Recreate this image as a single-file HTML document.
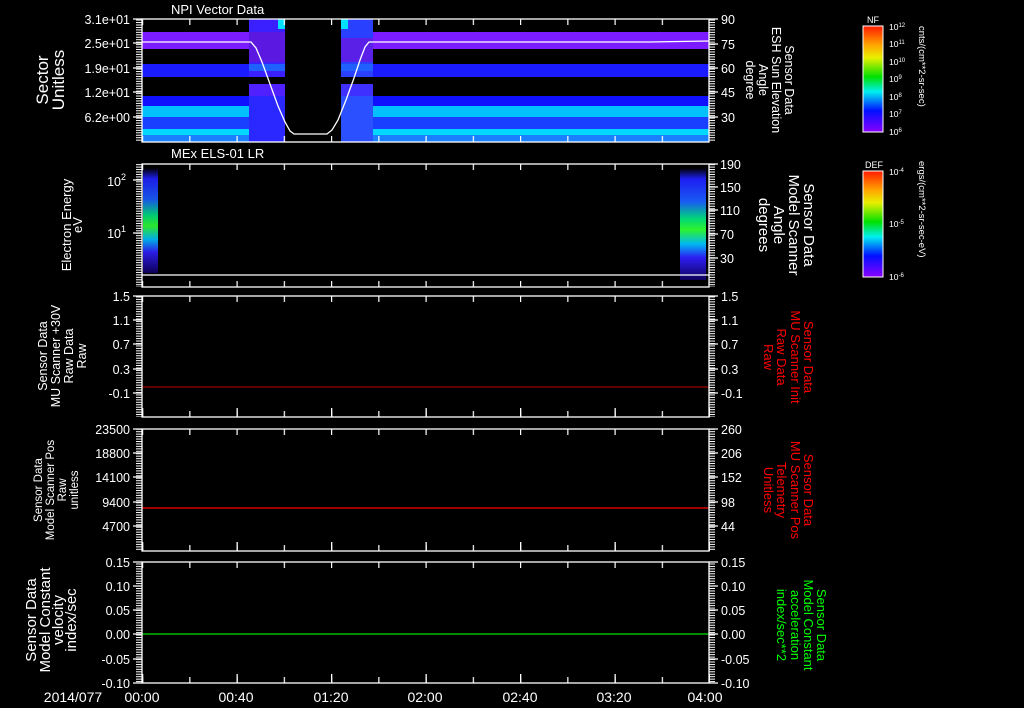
<!DOCTYPE html>
<html><head><meta charset="utf-8"><style>
html,body{margin:0;padding:0;background:#000;}
svg{display:block;font-family:"Liberation Sans",sans-serif;}
</style></head><body>
<svg width="1024" height="708" viewBox="0 0 1024 708" xmlns="http://www.w3.org/2000/svg">
<defs>
<pattern id="ml" width="8" height="2.45" patternUnits="userSpaceOnUse"><rect x="0" y="0" width="8" height="1" fill="#fff"/></pattern>
<pattern id="vt" width="47.25" height="10" patternUnits="userSpaceOnUse" x="142"><rect x="0" y="0" width="1.2" height="10" fill="#fff"/></pattern>
<pattern id="vt2" width="94.5" height="14" patternUnits="userSpaceOnUse" x="142"><rect x="0" y="0" width="1.3" height="14" fill="#fff"/></pattern>
<linearGradient id="cb" x1="0" y1="0" x2="0" y2="1">
<stop offset="0" stop-color="#ff1a00"/><stop offset="0.18" stop-color="#ffa500"/><stop offset="0.3" stop-color="#e8f000"/><stop offset="0.48" stop-color="#00e000"/><stop offset="0.62" stop-color="#00f0f0"/><stop offset="0.8" stop-color="#0010ff"/><stop offset="1" stop-color="#8a00ff"/>
</linearGradient>
<linearGradient id="els" x1="0" y1="0" x2="0" y2="1">
<stop offset="0" stop-color="#000"/><stop offset="0.1" stop-color="#2020ff"/><stop offset="0.3" stop-color="#1a60ff"/><stop offset="0.45" stop-color="#00e080"/><stop offset="0.55" stop-color="#30ff30"/><stop offset="0.68" stop-color="#00c0ff"/><stop offset="0.8" stop-color="#3020ff"/><stop offset="1" stop-color="#100060"/>
</linearGradient>
</defs>
<rect width="1024" height="708" fill="#000"/>

<g>
<rect x="142" y="32" width="107" height="17" fill="#7a1cff"/>
<rect x="142" y="64" width="107" height="13" fill="#1a1cff"/>
<rect x="142" y="96" width="107" height="10" fill="#1010ff"/>
<rect x="142" y="106" width="107" height="11" fill="#00c0ff"/>
<rect x="142" y="117" width="107" height="12" fill="#1a40ff"/>
<rect x="142" y="129" width="107" height="6" fill="#00d8ff"/>
<rect x="142" y="135" width="107" height="7" fill="#1a80ff"/>
<rect x="373" y="32" width="336" height="17" fill="#7a1cff"/>
<rect x="373" y="64" width="336" height="13" fill="#1a1cff"/>
<rect x="373" y="96" width="336" height="10" fill="#1010ff"/>
<rect x="373" y="106" width="336" height="11" fill="#00c0ff"/>
<rect x="373" y="117" width="336" height="12" fill="#1a40ff"/>
<rect x="373" y="129" width="336" height="6" fill="#00d8ff"/>
<rect x="373" y="135" width="336" height="7" fill="#1a80ff"/>
<rect x="540" y="49" width="169" height="3" fill="#000"/>
<rect x="249" y="19" width="36" height="58" fill="#3a20ff"/>
<rect x="249" y="32" width="36" height="30" fill="#5a18e0"/>
<rect x="249" y="84" width="36" height="12" fill="#5020ff"/>
<rect x="249" y="96" width="36" height="46" fill="#2a28ff"/>
<rect x="278" y="19" width="7" height="10" fill="#00e0ff"/>
<rect x="341" y="19" width="32" height="58" fill="#2a40ff"/>
<rect x="341" y="38" width="32" height="24" fill="#5a20e8"/>
<rect x="341" y="84" width="32" height="12" fill="#4030ff"/>
<rect x="341" y="96" width="32" height="46" fill="#2a50ff"/>
<rect x="341" y="19" width="7" height="10" fill="#00e0ff"/>
<rect x="249" y="64" width="36" height="7" fill="#2060ff"/>
<rect x="341" y="64" width="32" height="7" fill="#2060ff"/>
<polyline points="142,42 251,42 256,48 262,62 270,84 278,106 285,122 290,131 294,134 327,134 332,130 338,120 346,100 354,78 360,60 365,47 369,42 650,42 709,41" fill="none" stroke="#fff" stroke-width="1.3"/>
</g>

<rect x="143" y="168" width="15" height="105" fill="url(#els)" opacity="0.9"/>
<rect x="680" y="168" width="26" height="112" fill="url(#els)" opacity="0.95"/>
<line x1="142" y1="275" x2="709" y2="275" stroke="#fff" stroke-width="1.2"/>

<line x1="142" y1="387" x2="709" y2="387" stroke="#c00000" stroke-width="1"/>
<line x1="142" y1="508" x2="709" y2="508" stroke="#ff0000" stroke-width="1.3"/>
<line x1="142" y1="634" x2="709" y2="634" stroke="#00e000" stroke-width="1.3"/>

<g fill="none" stroke="#fff" stroke-width="1.3">
<rect x="142" y="19" width="567" height="123"/>
<rect x="142" y="164" width="567" height="123"/>
<rect x="142" y="296" width="567" height="121"/>
<rect x="142" y="429" width="567" height="122"/>
<rect x="142" y="562" width="567" height="121"/>
</g>
<g>
<rect x="136" y="19" width="6" height="123" fill="url(#ml)"/>
<rect x="709" y="19" width="6" height="123" fill="url(#ml)"/>
<rect x="136" y="164" width="6" height="123" fill="url(#ml)"/>
<rect x="709" y="164" width="6" height="123" fill="url(#ml)"/>
<rect x="136" y="296" width="6" height="121" fill="url(#ml)"/>
<rect x="709" y="296" width="6" height="121" fill="url(#ml)"/>
<rect x="136" y="429" width="6" height="122" fill="url(#ml)"/>
<rect x="709" y="429" width="6" height="122" fill="url(#ml)"/>
<rect x="136" y="562" width="6" height="121" fill="url(#ml)"/>
<rect x="709" y="562" width="6" height="121" fill="url(#ml)"/>
</g>
<g stroke="#fff" stroke-width="1.3">
<path d="M133 19H142M133 43H142M133 68H142M133 92H142M133 117H142M709 19H718M709 44H718M709 68H718M709 92H718M709 117H718"/>
<path d="M133 180H142M133 233H142M709 164H718M709 187H718M709 210H718M709 234H718M709 258H718"/>
<path d="M133 296H142M133 320H142M133 344H142M133 369H142M133 393H142M709 296H718M709 320H718M709 344H718M709 369H718M709 393H718"/>
<path d="M133 429H142M133 453H142M133 477H142M133 502H142M133 526H142M709 429H718M709 453H718M709 477H718M709 502H718M709 526H718"/>
<path d="M133 562H142M133 586H142M133 610H142M133 634H142M133 659H142M133 683H142M709 562H718M709 586H718M709 610H718M709 634H718M709 659H718M709 683H718"/>
</g>
<g>
<rect x="142" y="19" width="567" height="6" fill="url(#vt)"/><rect x="142" y="136" width="567" height="6" fill="url(#vt)"/>
<rect x="142" y="164" width="567" height="6" fill="url(#vt)"/><rect x="142" y="281" width="567" height="6" fill="url(#vt)"/>
<rect x="142" y="296" width="567" height="6" fill="url(#vt)"/><rect x="142" y="411" width="567" height="6" fill="url(#vt)"/>
<rect x="142" y="429" width="567" height="6" fill="url(#vt)"/><rect x="142" y="545" width="567" height="6" fill="url(#vt)"/>
<rect x="142" y="562" width="567" height="6" fill="url(#vt)"/><rect x="142" y="677" width="567" height="6" fill="url(#vt)"/>
<rect x="142" y="408" width="568" height="9" fill="url(#vt2)"/>
<rect x="142" y="542" width="568" height="9" fill="url(#vt2)"/>
<rect x="142" y="674" width="568" height="9" fill="url(#vt2)"/>
</g>

<g fill="#fff" font-size="13">
<text x="171" y="14">NPI Vector Data</text>
<text x="171" y="158">MEx ELS-01 LR</text>
<g text-anchor="end" font-size="12.5">
<text x="130" y="24">3.1e+01</text><text x="130" y="48">2.5e+01</text><text x="130" y="73">1.9e+01</text><text x="130" y="97">1.2e+01</text><text x="130" y="122">6.2e+00</text>
<text x="126" y="186">10<tspan font-size="9" dy="-6">2</tspan></text><text x="126" y="238">10<tspan font-size="9" dy="-6">1</tspan></text>
<text x="130" y="301">1.5</text><text x="130" y="325">1.1</text><text x="130" y="349">0.7</text><text x="130" y="374">0.3</text><text x="130" y="398">-0.1</text>
<text x="130" y="434">23500</text><text x="130" y="458">18800</text><text x="130" y="482">14100</text><text x="130" y="507">9400</text><text x="130" y="531">4700</text>
<text x="130" y="567">0.15</text><text x="130" y="591">0.10</text><text x="130" y="615">0.05</text><text x="130" y="639">0.00</text><text x="130" y="664">-0.05</text><text x="130" y="688">-0.10</text>
</g>
<g font-size="12.5">
<text x="721" y="24">90</text><text x="721" y="49">75</text><text x="721" y="73">60</text><text x="721" y="97">45</text><text x="721" y="122">30</text>
<text x="720" y="169">190</text><text x="720" y="192">150</text><text x="720" y="215">110</text><text x="720" y="239">70</text><text x="720" y="263">30</text>
<text x="721" y="301">1.5</text><text x="721" y="325">1.1</text><text x="721" y="349">0.7</text><text x="721" y="374">0.3</text><text x="721" y="398">-0.1</text>
<text x="721" y="434">260</text><text x="721" y="458">206</text><text x="721" y="482">152</text><text x="721" y="507">98</text><text x="721" y="531">44</text>
<text x="721" y="567">0.15</text><text x="721" y="591">0.10</text><text x="721" y="615">0.05</text><text x="721" y="639">0.00</text><text x="721" y="664">-0.05</text><text x="721" y="688">-0.10</text>
</g>
<g font-size="14" text-anchor="middle">
<text x="73" y="702">2014/077</text><text x="142" y="702">00:00</text><text x="236" y="702">00:40</text><text x="331" y="702">01:20</text><text x="425" y="702">02:00</text><text x="520" y="702">02:40</text><text x="614" y="702">03:20</text><text x="705" y="702">04:00</text>
</g>
<g text-anchor="middle">
<text transform="translate(48,80) rotate(-90)" font-size="17">Sector</text>
<text transform="translate(64,80) rotate(-90)" font-size="17">Unitless</text>
<text transform="translate(71,225) rotate(-90)" font-size="13">Electron Energy</text>
<text transform="translate(82,225) rotate(-90)" font-size="13">eV</text>
<text transform="translate(47,356) rotate(-90)" font-size="12.5">Sensor Data</text>
<text transform="translate(60,356) rotate(-90)" font-size="12.5">MU Scanner +30V</text>
<text transform="translate(73,356) rotate(-90)" font-size="12.5">Raw Data</text>
<text transform="translate(86,356) rotate(-90)" font-size="12.5">Raw</text>
<text transform="translate(42,490) rotate(-90)" font-size="11.5">Sensor Data</text>
<text transform="translate(54,490) rotate(-90)" font-size="11.5">Model Scanner Pos</text>
<text transform="translate(66,490) rotate(-90)" font-size="11.5">Raw</text>
<text transform="translate(78,490) rotate(-90)" font-size="11.5">unitless</text>
<text transform="translate(36,620) rotate(-90)" font-size="15">Sensor Data</text>
<text transform="translate(50,620) rotate(-90)" font-size="15">Model Constant</text>
<text transform="translate(63,620) rotate(-90)" font-size="15">velocity</text>
<text transform="translate(76,620) rotate(-90)" font-size="15">index/sec</text>
</g>
<g text-anchor="middle">
<text transform="translate(785,80) rotate(90)" font-size="12.5">Sensor Data</text>
<text transform="translate(772,80) rotate(90)" font-size="12.5">ESH Sun Elevation</text>
<text transform="translate(759,80) rotate(90)" font-size="12.5">Angle</text>
<text transform="translate(746,80) rotate(90)" font-size="12.5">degree</text>
<text transform="translate(804,225) rotate(90)" font-size="15">Sensor Data</text>
<text transform="translate(789,225) rotate(90)" font-size="15">Model Scanner</text>
<text transform="translate(774,225) rotate(90)" font-size="15">Angle</text>
<text transform="translate(759,225) rotate(90)" font-size="15">degrees</text>
<g fill="#ff0000" font-size="13">
<text transform="translate(804,357) rotate(90)">Sensor Data</text>
<text transform="translate(791,357) rotate(90)">MU Scanner Init</text>
<text transform="translate(777,357) rotate(90)">Raw Data</text>
<text transform="translate(764,357) rotate(90)">Raw</text>
<text transform="translate(804,490) rotate(90)">Sensor Data</text>
<text transform="translate(791,490) rotate(90)">MU Scanner Pos</text>
<text transform="translate(777,490) rotate(90)">Telemetry</text>
<text transform="translate(764,490) rotate(90)">Unitless</text>
</g>
<g fill="#00ff00" font-size="13">
<text transform="translate(817,625) rotate(90)">Sensor Data</text>
<text transform="translate(804,625) rotate(90)">Model Constant</text>
<text transform="translate(791,625) rotate(90)">acceleration</text>
<text transform="translate(777,625) rotate(90)">index/sec**2</text>
</g>
</g>
<rect x="863" y="26" width="20" height="106" fill="url(#cb)" stroke="#fff" stroke-width="1"/>
<rect x="863" y="171" width="20" height="106" fill="url(#cb)" stroke="#fff" stroke-width="1"/>
<text x="867" y="23" font-size="9">NF</text>
<text x="865" y="168" font-size="9">DEF</text>
<g font-size="8.5">
<text x="889" y="30">10<tspan font-size="6" dy="-3">12</tspan></text>
<text x="889" y="47">10<tspan font-size="6" dy="-3">11</tspan></text>
<text x="889" y="65">10<tspan font-size="6" dy="-3">10</tspan></text>
<text x="889" y="82">10<tspan font-size="6" dy="-3">9</tspan></text>
<text x="889" y="100">10<tspan font-size="6" dy="-3">8</tspan></text>
<text x="889" y="117">10<tspan font-size="6" dy="-3">7</tspan></text>
<text x="889" y="135">10<tspan font-size="6" dy="-3">6</tspan></text>
<text x="889" y="175">10<tspan font-size="6" dy="-3">-4</tspan></text>
<text x="889" y="227">10<tspan font-size="6" dy="-3">-5</tspan></text>
<text x="889" y="280">10<tspan font-size="6" dy="-3">-6</tspan></text>
</g>
<g font-size="9.5">
<text transform="translate(919,26) rotate(90)">cnts/(cm**2-sr-sec)</text>
<text transform="translate(919,161) rotate(90)">ergs/(cm**2-sr-sec-eV)</text>
</g>
</g>
</svg>
</body></html>
